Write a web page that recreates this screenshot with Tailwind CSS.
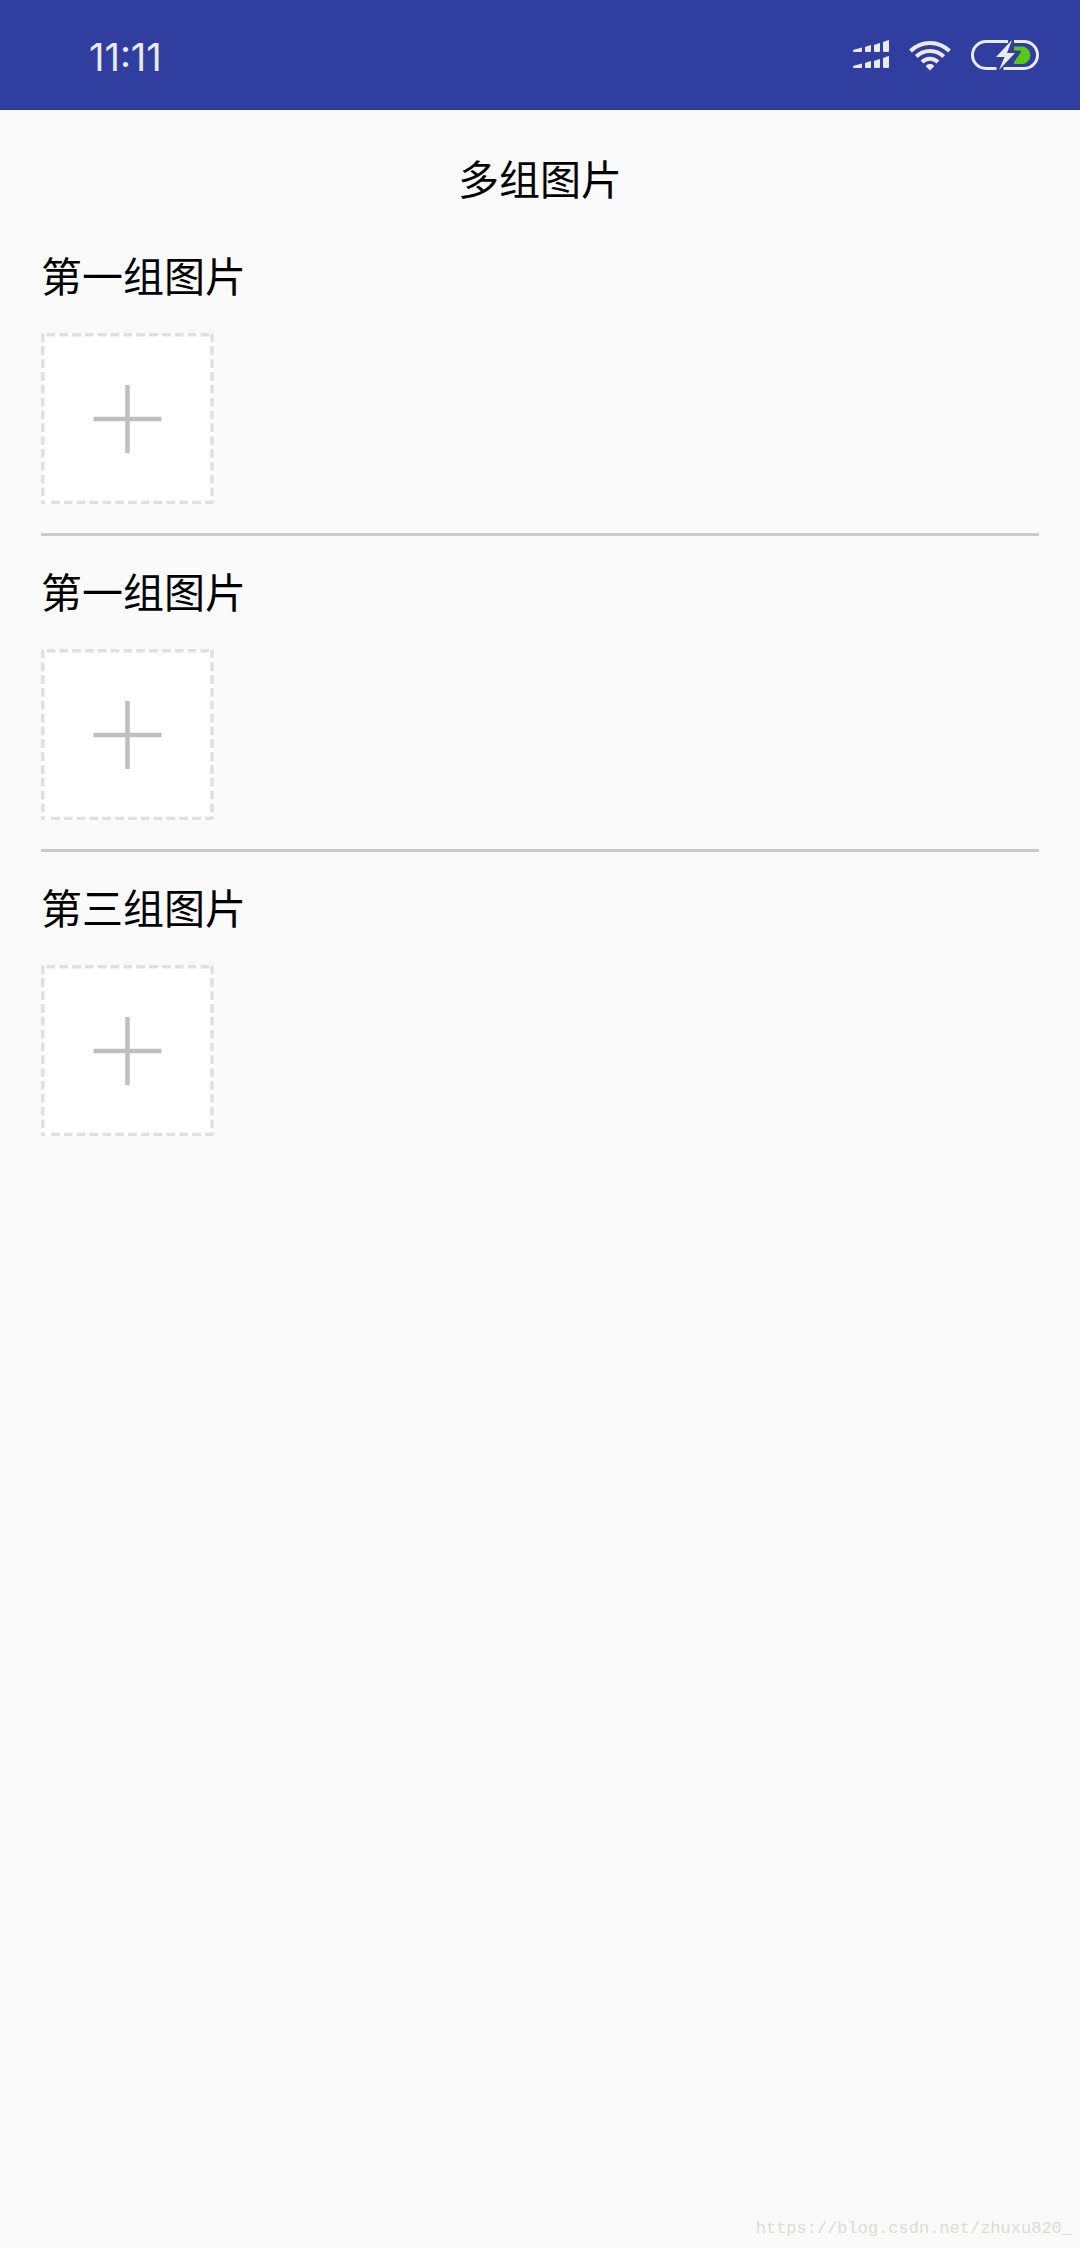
<!DOCTYPE html>
<html lang="zh-CN">
  <head>
    <meta charset="UTF-8" />
    <meta name="viewport" content="width=device-width, initial-scale=1.0" />
    <title>多组图片</title>
    <script src="https://cdn.jsdelivr.net/npm/@tailwindcss/browser@4"></script>
  </head>
  <body class="min-h-screen flex flex-col bg-[#fafafa] text-black font-['Noto_Sans_CJK_SC',sans-serif]">
    <!-- status bar -->
    <header class="h-[110px] flex items-center justify-between pl-[89px] pr-[41px] bg-[#303f9f] text-[#e9eaf5]">
      <time class="pt-[3px] text-[38px] leading-none font-['Inter',sans-serif]">11:11</time>
      <div class="flex items-center gap-5">
        <svg class="w-9 h-[30px]" viewBox="0 0 36 30" fill="currentColor" aria-label="信号">
          <path d="M0 11V10L9 7.500V11a1 1 0 0 1-1 1H1a1 1 0 0 1-1-1zM12 7l5.500-2q.5 0 .5.5V11a1 1 0 0 1-1 1h-4a1 1 0 0 1-1-1zM21 5l5.500-2q.5 0 .5.5V11a1 1 0 0 1-1 1h-4a1 1 0 0 1-1-1zM30 2l5.500-2q.5 0 .5.5V11a1 1 0 0 1-1 1h-4a1 1 0 0 1-1-1z" />
          <path d="M0 27V26L9 23.500V27a1 1 0 0 1-1 1H1a1 1 0 0 1-1-1zM12 23l5.500-2q.5 0 .5.5V27a1 1 0 0 1-1 1h-4a1 1 0 0 1-1-1zM21 21l5.500-2q.5 0 .5.5V27a1 1 0 0 1-1 1h-4a1 1 0 0 1-1-1zM30 18l5.500-2q.5 0 .5.5V27a1 1 0 0 1-1 1h-4a1 1 0 0 1-1-1z" />
        </svg>
        <svg class="w-[42px] h-[31px]" viewBox="0 0 42 31" fill="none" stroke="currentColor" stroke-width="4" aria-label="WLAN">
          <path d="M1.500 11a27.500 27.500 0 0 1 39 0M7.300 16.500a19.500 19.500 0 0 1 27.400 0M13 22a11.500 11.500 0 0 1 16 0" />
          <path d="M21 30.500l-4-4q0-2.500 4-2.500t4 2.500z" fill="currentColor" stroke="none" />
        </svg>
        <svg class="w-[68px] h-[30px]" viewBox="0 0 68 30" fill="none" aria-label="充电中">
          <path d="M37 1.500H15a13.500 13.500 0 0 0 0 27h10.500M43 1.500h10a13.500 13.500 0 0 1 0 27H32.500" stroke="currentColor" stroke-width="3" />
          <path d="M43 6.500h9.500a9 9 0 0 1 0 17.500H43v-2l7-10q0-1.500-1.500-1.500H43z" fill="#5ac816" />
          <path d="M41 0L25 17h8.500L28 30l16-17h-8z" fill="currentColor" />
        </svg>
      </div>
    </header>

    <main class="flex flex-col px-[41px]">
      <h1 class="pt-[42px] pb-[18px] text-center text-[41px] leading-[50px] font-normal">多组图片</h1>

      <section class="py-[29px] border-b-3 border-[#cacaca]">
        <h2 class="mb-[34px] text-[41px] leading-[50px] font-normal">第一组图片</h2>
        <button type="button" class="block bg-white cursor-pointer" aria-label="添加图片">
          <svg class="block w-[173px] h-[171px]" viewBox="0 0 173 171" fill="none">
            <g stroke="#e0e0e0" stroke-width="3.500" stroke-dasharray="8.800 4.030">
              <path d="M5.500 1.750H168M10 169.500H173M1.750 .5V171M171 .5V171" />
            </g>
            <path d="M0 169.500h4" stroke="#e0e0e0" stroke-width="3" />
            <path d="M52.500 86H120.500M86.500 52V120" stroke="#bfbfbf" stroke-width="4.500" />
          </svg>
        </button>
      </section>

      <section class="py-[29px] border-b-3 border-[#cacaca]">
        <h2 class="mb-[34px] text-[41px] leading-[50px] font-normal">第一组图片</h2>
        <button type="button" class="block bg-white cursor-pointer" aria-label="添加图片">
          <svg class="block w-[173px] h-[171px]" viewBox="0 0 173 171" fill="none">
            <g stroke="#e0e0e0" stroke-width="3.500" stroke-dasharray="8.800 4.030">
              <path d="M5.500 1.750H168M10 169.500H173M1.750 .5V171M171 .5V171" />
            </g>
            <path d="M0 169.500h4" stroke="#e0e0e0" stroke-width="3" />
            <path d="M52.500 86H120.500M86.500 52V120" stroke="#bfbfbf" stroke-width="4.500" />
          </svg>
        </button>
      </section>

      <section class="py-[29px]">
        <h2 class="mb-[34px] text-[41px] leading-[50px] font-normal">第三组图片</h2>
        <button type="button" class="block bg-white cursor-pointer" aria-label="添加图片">
          <svg class="block w-[173px] h-[171px]" viewBox="0 0 173 171" fill="none">
            <g stroke="#e0e0e0" stroke-width="3.500" stroke-dasharray="8.800 4.030">
              <path d="M5.500 1.750H168M10 169.500H173M1.750 .5V171M171 .5V171" />
            </g>
            <path d="M0 169.500h4" stroke="#e0e0e0" stroke-width="3" />
            <path d="M52.500 86H120.500M86.500 52V120" stroke="#bfbfbf" stroke-width="4.500" />
          </svg>
        </button>
      </section>
    </main>

    <footer class="mt-auto pr-2 pb-[7px] text-right text-[17px] leading-6 text-[#dcdcd8] font-['Liberation_Mono',monospace]">
      https://blog.csdn.net/zhuxu820_
    </footer>
  </body>
</html>
